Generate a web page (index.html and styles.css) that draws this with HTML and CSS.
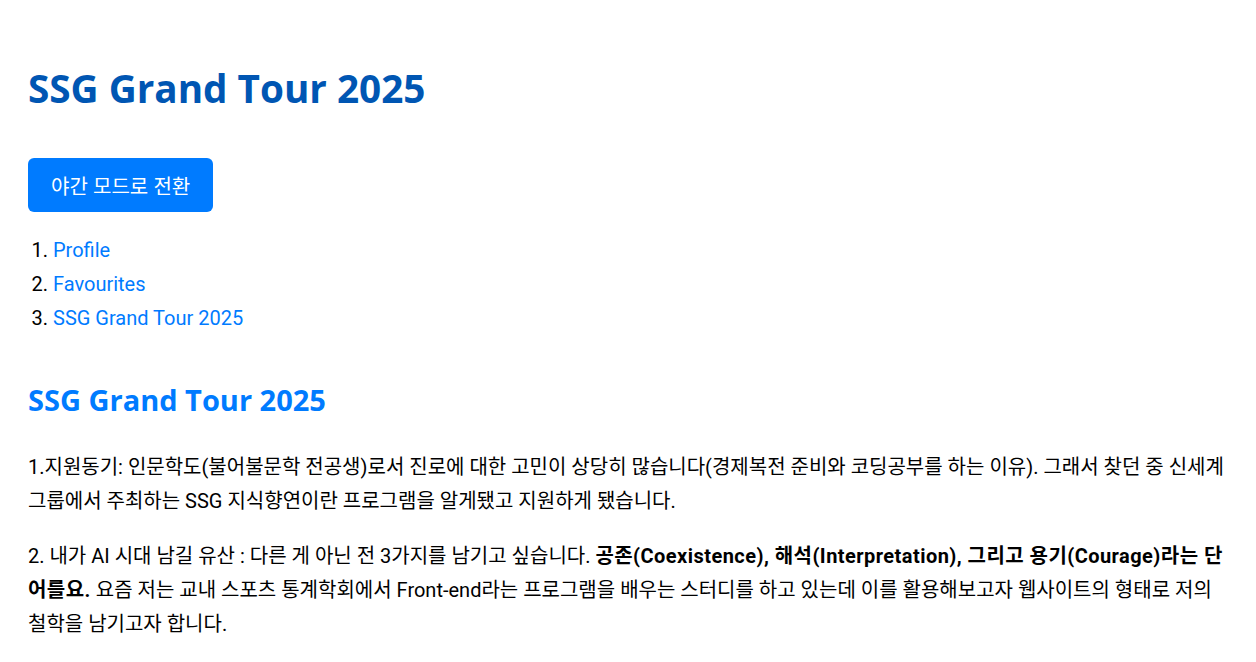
FILE: index.html
```html
<!DOCTYPE html>
<html lang="ko">
<head>
<meta charset="utf-8">
<title>SSG Grand Tour 2025</title>
<link rel="stylesheet" href="styles.css">
</head>
<body>
<main class="page">
  <h1 class="title">SSG Grand Tour 2025</h1>
  <button class="mode-btn" type="button">야간 모드로 전환</button>
  <ol class="nav-list">
    <li><a href="#">Profile</a></li>
    <li><a href="#">Favourites</a></li>
    <li><a href="#">SSG Grand Tour 2025</a></li>
  </ol>
  <section class="content">
    <h2 class="section-title">SSG Grand Tour 2025</h2>
    <p>1.지원동기: 인문학도(불어불문학 전공생)로서 진로에 대한 고민이 상당히 많습니다(경제복전 준비와 코딩공부를 하는 이유). 그래서 찾던 중 신세계 그룹에서 주최하는 SSG 지식향연이란 프로그램을 알게됐고 지원하게 됐습니다.</p>
    <p>2. 내가 AI 시대 남길 유산 : 다른 게 아닌 전 3가지를 남기고 싶습니다. <strong class="key">공존(Coexistence), 해석(Interpretation), 그리고 용기(Courage)라는 단어를요.</strong> 요즘 저는 교내 스포츠 통계학회에서 Front-end라는 프로그램을 배우는 스터디를 하고 있는데 이를 활용해보고자 웹사이트의 형태로 저의 철학을 남기고자 합니다.</p>
  </section>
</main>
</body>
</html>
```
FILE: styles.css
```css
html, body {
  margin: 0;
  padding: 0;
  background: #ffffff;
}
body {
  font-family: "Roboto", "Noto Sans CJK KR", sans-serif;
  font-size: 20px;
  line-height: 34px;
  color: #000000;
}
.page {
  padding: 60px 28px 20px 28px;
  max-width: 1200px;
}
.title {
  margin: 0;
  font-family: "Open Sans", "Noto Sans CJK KR", sans-serif;
  font-size: 38.7px;
  line-height: 56px;
  font-weight: 700;
  color: #0056b3;
}
.mode-btn {
  margin-top: 42px;
  display: block;
  height: 54px;
  padding: 0 23px;
  border: none;
  border-radius: 6px;
  background: #007bff;
  color: #ffffff;
  font-family: "Open Sans", "Noto Sans CJK KR", sans-serif;
  font-size: 20px;
}
.nav-list {
  margin: 21px 0 0 0;
  padding-left: 25px;
}
.nav-list a {
  color: #007bff;
  text-decoration: none;
}
.section-title {
  margin: 42px 0 0 0;
  font-family: "Open Sans", "Noto Sans CJK KR", sans-serif;
  font-size: 29px;
  line-height: 46px;
  font-weight: 700;
  color: #007bff;
}
.content p {
  margin: 27px 0 0 0;
}
.content p + p {
  margin-top: 21px;
}
.key {
  font-weight: 700;
  letter-spacing: 0.45px;
}
```
